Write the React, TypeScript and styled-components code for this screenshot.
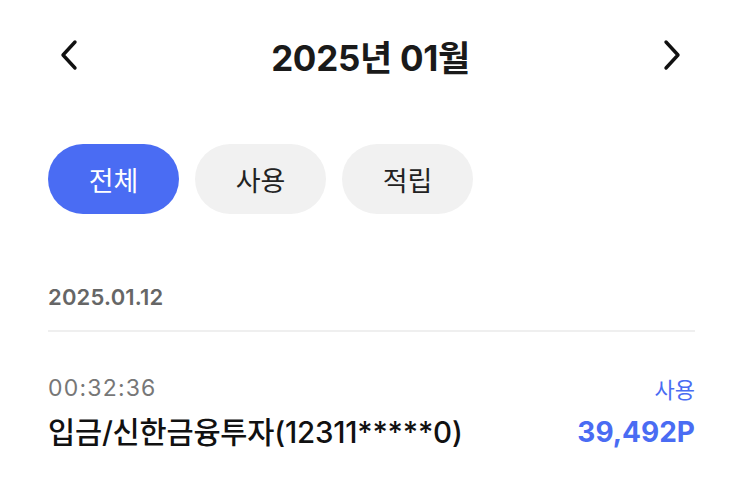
import React from "react";
import styled, { createGlobalStyle } from "styled-components";

const Global = createGlobalStyle`
  html, body { margin: 0; padding: 0; background: #fff; }
  body { font-family: "Noto Sans", "Noto Sans CJK KR", "Inter", sans-serif; -webkit-font-smoothing: antialiased; }
`;

const Page = styled.div`
  width: 743px;
  height: 503px;
  box-sizing: border-box;
  padding: 0 48px;
  display: flex;
  flex-direction: column;
  overflow: hidden;
`;

const Header = styled.div`
  height: 110px;
  display: flex;
  align-items: center;
  justify-content: space-between;
`;

const NavButton = styled.button<{ $side: "l" | "r" }>`
  width: 44px;
  height: 44px;
  border: none;
  background: none;
  padding: 0;
  display: flex;
  align-items: center;
  justify-content: ${(p) => (p.$side === "l" ? "flex-start" : "flex-end")};
  margin: ${(p) => (p.$side === "l" ? "0 0 0 12px" : "0 14px 0 0")};
`;

const Title = styled.h1`
  margin: 0;
  font-family: "Inter", "Noto Sans CJK KR", sans-serif;
  font-size: 35px;
  font-weight: 700;
  color: #1a1a1a;
  letter-spacing: -0.3px;
`;

const Chips = styled.div`
  display: flex;
  gap: 16px;
  margin-top: 34px;
`;

const Chip = styled.button<{ $active?: boolean }>`
  width: 131px;
  height: 70px;
  border: none;
  border-radius: 35px;
  background: ${(p) => (p.$active ? "#4a6cf3" : "#f1f1f1")};
  color: ${(p) => (p.$active ? "#fff" : "#222")};
  font-family: "Noto Sans CJK KR", sans-serif;
  font-size: 27px;
  font-weight: 400;
  padding: 0;
`;

const DateLabel = styled.div`
  margin-top: 68px;
  font-family: "Inter", "Noto Sans CJK KR", sans-serif;
  font-size: 22px;
  font-weight: 600;
  color: #666;
  line-height: 30px;
  letter-spacing: 0.2px;
`;

const Divider = styled.div`
  margin-top: 18px;
  height: 2px;
  background: #efefef;
`;

const Item = styled.div`
  margin-top: 41px;
  display: flex;
  flex-direction: column;
  gap: 10px;
`;

const Row = styled.div`
  display: flex;
  justify-content: space-between;
  align-items: center;
`;

const Time = styled.span`
  font-family: "Inter", sans-serif;
  font-size: 23px;
  color: #777;
  line-height: 30px;
  letter-spacing: 1.2px;
`;

const Kind = styled.span`
  font-family: "Noto Sans CJK KR", sans-serif;
  font-size: 22px;
  color: #4a6cf3;
  line-height: 30px;
`;

const Name = styled.span`
  font-family: "Inter", "Noto Sans CJK KR", sans-serif;
  font-size: 29.5px;
  font-weight: 500;
  color: #111;
  line-height: 38px;
  letter-spacing: -0.2px;
`;

const Amount = styled.span`
  font-family: "Inter", sans-serif;
  font-size: 28px;
  font-weight: 700;
  color: #4a6cf3;
  line-height: 38px;
`;

const Chevron = ({ dir }: { dir: "l" | "r" }) => (
  <svg width="18" height="32" viewBox="0 0 18 32" fill="none">
    <path
      d={dir === "l" ? "M15 3 L3 16 L15 29" : "M3 3 L15 16 L3 29"}
      stroke="#111"
      strokeWidth="3.4"
      strokeLinecap="round"
      strokeLinejoin="round"
    />
  </svg>
);

export default function App() {
  return (
    <>
      <Global />
      <Page>
        <Header>
          <NavButton $side="l">
            <Chevron dir="l" />
          </NavButton>
          <Title>2025년 01월</Title>
          <NavButton $side="r">
            <Chevron dir="r" />
          </NavButton>
        </Header>
        <Chips>
          <Chip $active>전체</Chip>
          <Chip>사용</Chip>
          <Chip>적립</Chip>
        </Chips>
        <DateLabel>2025.01.12</DateLabel>
        <Divider />
        <Item>
          <Row>
            <Time>00:32:36</Time>
            <Kind>사용</Kind>
          </Row>
          <Row>
            <Name>입금/신한금융투자(12311*****0)</Name>
            <Amount>39,492P</Amount>
          </Row>
        </Item>
      </Page>
    </>
  );
}
